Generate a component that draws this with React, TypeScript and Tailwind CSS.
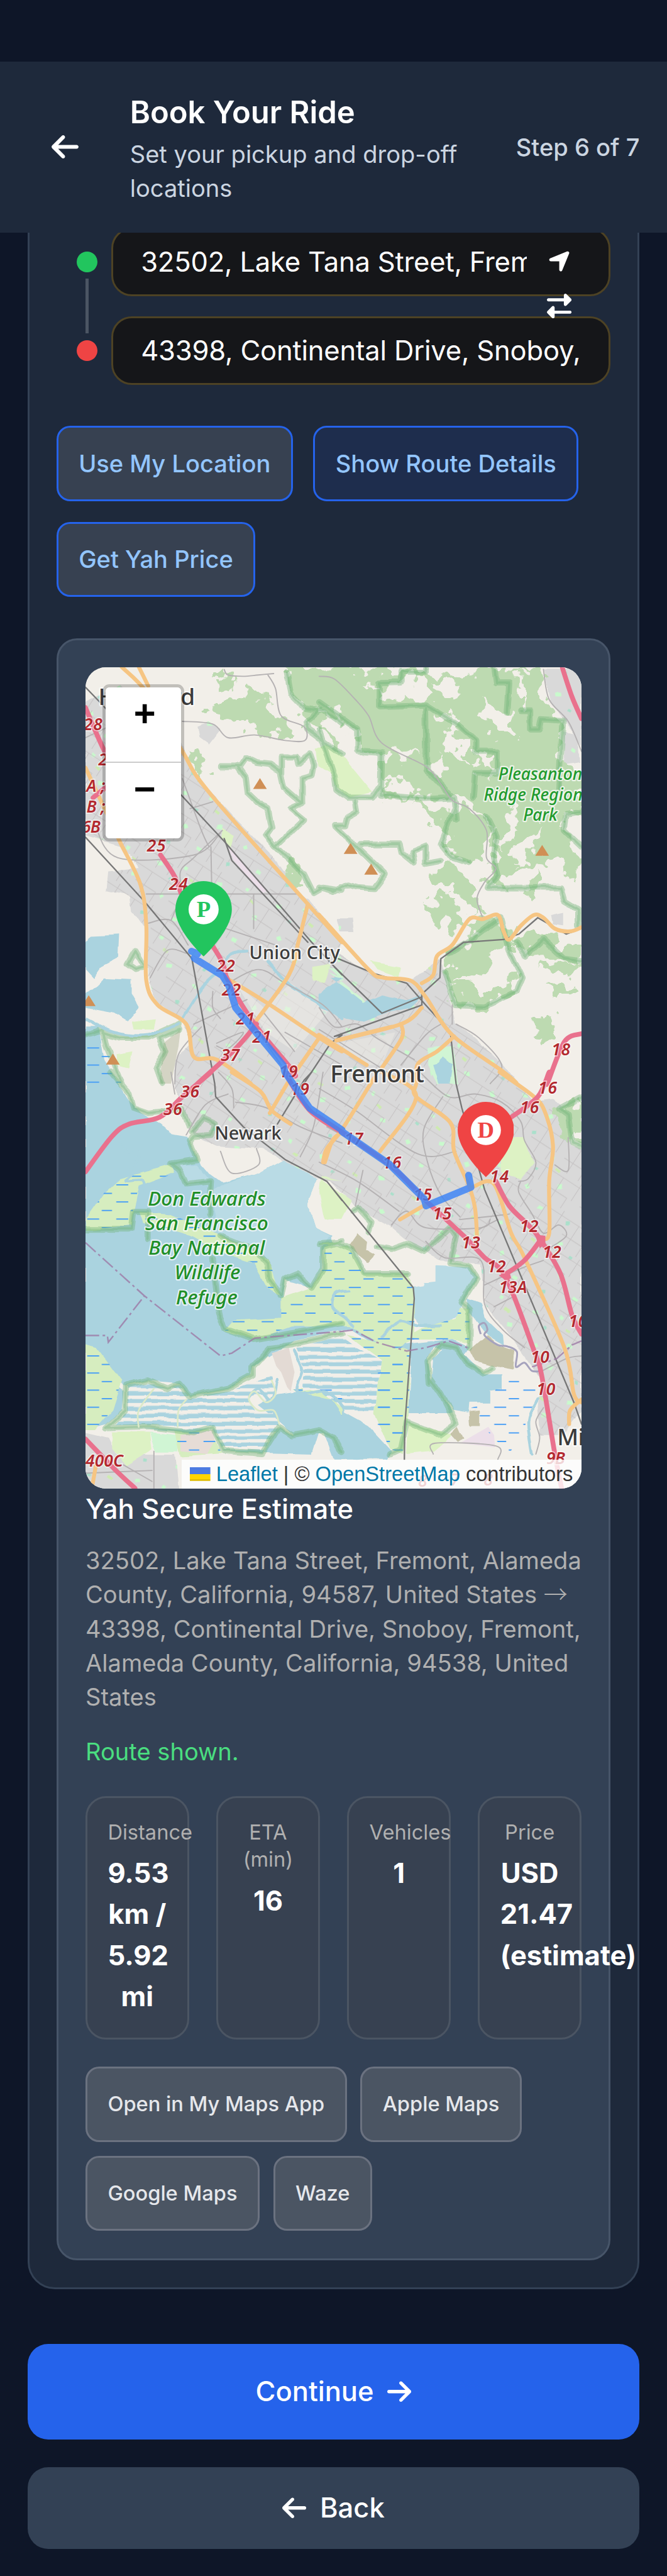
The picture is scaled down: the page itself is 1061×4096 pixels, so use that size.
import React from "react";
import { FaArrowLeft, FaArrowRight, FaLocationArrow, FaRightLeft } from "react-icons/fa6";

/* ---------- Map geometry ---------- */

// Survey sheets: origin of each sheet in map units.
const SHEETS: Record<string, [number, number]> = {
  nw: [-16.67, -6.67],
  ne: [136.67, -6.67],
  sw: [-16.67, 236.67],
  se: [136.67, 236.67],
};

function points(src: string): [number, number][] {
  let origin = SHEETS.nw;
  const out: [number, number][] = [];
  for (const token of src.trim().split(/\s+/)) {
    if (SHEETS[token]) {
      origin = SHEETS[token];
      continue;
    }
    const [x, y] = token.split(",").map(Number);
    out.push([x / 9 + origin[0], y / 6.272 + origin[1]]);
  }
  return out;
}

const fmt = (n: number) => n.toFixed(2);

function straight(src: string, close = false) {
  return "M" + points(src).map(([x, y]) => `${fmt(x)} ${fmt(y)}`).join("L") + (close ? "Z" : "");
}

// Catmull-Rom spline through the points.
function curve(src: string) {
  const p = points(src);
  let d = `M${fmt(p[0][0])} ${fmt(p[0][1])}`;
  for (let i = 0; i < p.length - 1; i++) {
    const a = p[Math.max(0, i - 1)];
    const b = p[i];
    const c = p[i + 1];
    const e = p[Math.min(p.length - 1, i + 2)];
    d += `C${fmt(b[0] + (c[0] - a[0]) / 6)} ${fmt(b[1] + (c[1] - a[1]) / 6)} ${fmt(c[0] - (e[0] - b[0]) / 6)} ${fmt(c[1] - (e[1] - b[1]) / 6)} ${fmt(c[0])} ${fmt(c[1])}`;
  }
  return d;
}

const URBAN = [
  "nw 150,170 330,110 420,170 640,290 720,430 840,520 930,590 1130,730 1260,860 1330,900 1500,1040 ne 100,1090 270,1170 470,1200 640,1110 690,1260 720,1340 860,1430 960,1490 1050,1568 se 1000,0 1130,110 1240,100 1300,160 1320,270 1380,280 1380,1240 1280,1330 1160,1330 1150,1230 1170,1130 1000,960 870,850 850,700 640,690 500,640 380,570 200,500 60,400 sw 1380,390 1180,320 1080,280 840,270 720,230 660,120 620,60 nw 620,1568 620,1480 700,1420 660,1340 530,1270 480,1190 470,1000 430,960 390,940 380,880 260,860 270,790 430,780 350,700 150,660",
  "nw 740,260 800,245 860,270 800,325 750,300",
  "ne 1180,50 1380,50 1380,330 1300,250 1220,170",
  "ne 90,960 170,960 180,1010 110,1010",
  "ne 1220,950 1290,940 1290,990 1230,985",
  "ne 1280,280 1360,290 1370,390 1290,400",
  "sw 150,1320 270,1340 310,1400 620,1400 640,1560 150,1560",
];

const FOREST = [
  "ne 50,50 560,45 700,70 900,50 1170,45 1190,160 1270,230 1290,400 1380,420 1380,560 1280,600 1380,760 1300,800 1200,760 1080,780 1000,800 960,850 900,840 930,700 880,600 820,560 700,520 560,520 340,510 330,360 200,350 190,260 100,230 0,170 0,60",
  "nw 1210,50 1340,45 1500,80 1500,360 1380,260 1300,230 1260,150",
  "nw 800,180 930,180 1000,140 1130,150 1110,210 1200,250 1290,270 1220,300 1050,270 930,240 820,210",
  "ne 500,540 700,560 880,620 890,760 830,760 700,720 640,700 720,640 610,610",
  "ne 590,790 690,760 800,840 860,930 820,950 740,880 640,830",
  "ne 550,900 680,880 760,980 690,1010 620,950",
  "ne 680,1080 820,1050 800,970 950,960 1040,1090 1000,1020 1180,1010 1300,1060 1380,1050 1380,1120 1240,1110 1100,1080 980,1050 920,1140 840,1150 780,1220 900,1220 1000,1200 1060,1170 1040,1230 880,1290 730,1280 690,1190",
  "ne 1200,1210 1300,1210 1350,1250 1260,1250",
  "ne 1130,1340 1200,1330 1250,1370 1200,1420 1120,1400",
  "se 1250,140 1380,90 1380,270 1310,260",
  "nw 840,90 890,60 920,90 870,115",
  "nw 690,340 720,350 800,430 770,440 720,400",
  "nw 1200,780 1260,770 1300,830 1270,850",
  "ne 1060,850 1180,790 1150,860 1120,920",
  "ne 1130,1150 1240,1130 1380,1110 1300,1170",
];

const CLEARINGS = [
  "ne 200,120 380,95 560,70 600,130 560,160 330,165 330,120",
  "ne 620,90 700,90 760,140 700,160 640,130",
  "ne 600,200 700,250 780,310 790,400 740,390 720,340 650,330 690,280 620,240",
  "ne 590,420 640,350 660,420 620,450",
  "ne 0,190 120,240 180,280 170,340 40,270",
  "ne 820,360 900,360 920,430 820,430",
  "ne 340,460 450,440 520,500 360,500",
  "ne 820,170 930,190 1040,260 1050,300 940,290 880,240",
  "ne 350,340 450,345 520,375 440,375",
  "ne 970,640 1030,560 1050,630 970,710",
  "ne 980,740 1090,660 1180,620 1140,720 1040,770",
  "ne 760,1170 880,1150 1010,1150 960,1200 800,1210 720,1200",
  "ne 1055,60 1085,60 1080,180 1055,180",
];

const PARK_EDGES = [
  "ne 320,100 430,98 430,60 560,60 560,45",
  "ne 315,100 315,185 560,180 720,250 820,310 820,350 940,350 940,430 820,430 810,520",
  "ne 560,190 565,420 700,520",
  "ne 0,170 140,240 200,270 200,350 330,355 325,510 560,525 710,520 720,600",
  "nw 1210,60 1230,140 1300,190 1400,200 1500,250",
  "nw 1390,190 1310,240 1320,270 1500,360",
  "nw 860,405 960,405 990,375 1050,395 1120,400 1180,430 1180,370 1260,370 1270,395 1330,360 1350,400 1340,440 1290,450 1290,540 1190,480 1170,420",
  "nw 950,410 990,450 1000,500 1060,540 1110,560 1130,630 1100,660 1150,700 1300,600 1230,560 1290,540",
  "nw 1150,700 1300,800 1350,870 1400,850 1500,860",
  "ne 0,270 80,440 90,490 150,520 280,520 320,480",
  "ne 190,530 200,570 150,590 140,620 80,620 350,800 290,855 200,850 150,840 80,865 0,850",
  "ne 220,690 420,690 430,720 500,760 490,720 560,700 560,760 640,750",
  "ne 720,540 640,690 700,740 790,760",
  "ne 920,50 930,100 1000,100 990,210",
  "ne 1060,200 1110,200 1110,270 1160,270 1170,230 1280,235 1270,350 1260,490",
  "ne 880,590 930,660 920,740 940,800 890,850 1270,850 1290,900 1360,930 1360,990",
  "ne 1380,570 1300,580 1290,640 1380,700",
  "ne 680,1090 800,1040 950,960 1000,1080 1070,1180 1040,1230 870,1285 720,1280 660,1160",
  "ne 1040,1050 1090,1100 1180,1040 1290,1110 1380,1120",
  "nw 150,1390 240,1370 260,1430 340,1568",
  "nw 240,1380 330,1400 480,1400 640,1350",
  "nw 370,1130 410,1080 460,1140 410,1150 370,1130",
  "nw 640,1370 540,1400 570,1450 520,1510 550,1568",
  "sw 280,0 380,80 400,130 480,150 600,140 660,130 690,200",
  "sw 710,220 770,170 830,190 810,230 720,235 700,250 740,320 600,335 650,360 680,410 810,400 800,520",
  "sw 150,575 390,575 400,510 480,510 480,610",
  "sw 860,600 1040,650 1110,700 1120,760 1180,820 1200,760 1270,740 1340,790 1400,720 1400,640 1500,620",
  "sw 820,680 850,880 880,940 1040,980 1200,960 1500,920",
  "sw 260,1305 360,1240 360,1150 480,1130 580,1160 640,1140 700,1190 900,1160 1030,1110 1030,1080 1120,1010 1230,1000 1500,960",
  "sw 260,1305 480,1300 720,1320 820,1300 880,1390 1080,1400 1170,1300 1240,1330 1380,1310 1460,1340 1500,1390",
  "se 0,630 90,625 170,650 240,740 460,740",
  "se 310,640 380,650 460,630 550,660 690,570 720,600 690,700 790,710 830,750 750,840 790,870 790,1010",
  "se 580,1140 570,1060 640,1000 720,1010 780,1070 870,1105 910,1085",
  "se 580,1120 640,1180 720,1290 640,1330 460,1280 430,1380 370,1400",
  "se 1380,90 1260,135 1310,160 1330,260 1380,270",
  "se 180,510 210,500 275,550 260,580",
];

const WATER = [
  "sw 150,-170 220,-170 250,-40 370,100 440,150 540,190 600,230 690,240 740,320 800,370 870,405 1060,370 1190,320 1370,390 1320,480 1360,570 1450,600 1400,640 1390,720 1340,790 1200,760 1180,920 1500,925 se 0,935 160,900 240,920 300,970 440,1000 700,980 790,1010 760,1040 600,1010 560,1060 320,1010 160,940 0,965 sw 1250,985 1030,1080 1020,1110 900,1160 700,1190 640,1140 480,1130 350,1150 150,1050",
  "nw 150,1050 180,1025 330,1020 325,1105 230,1140 190,1180 150,1150",
  "nw 200,1215 250,1180 390,1185 390,1240 430,1290 370,1340 300,1310 150,1290 150,1240",
  "nw 1380,1240 1500,1180 ne 60,1180 140,1220 230,1270 330,1240 460,1260 550,1240 480,1290 350,1310 230,1340 140,1330 0,1290",
  "sw 260,1290 340,1240 350,1170 150,1060 150,1310",
  "sw 1090,1395 1170,1300 1240,1330 1380,1310 1340,1400",
  "sw 1060,1220 1160,1180 1260,1170 1500,1190 se 130,1250 260,1300 380,1390 360,1420 80,1420 20,1310 0,1300 sw 1460,1320 1250,1330 1170,1280",
  "se 490,1030 560,1020 590,1130 640,1180 700,1250 470,1250",
  "se 590,1130 600,1050 660,1010 740,1020 870,1110 960,1110 960,1165 900,1170 900,1210 790,1210 785,1250 700,1240",
  "se 775,830 850,850 870,900 960,960 965,1000 890,970 780,870",
  "se 610,-20 650,-60 700,-30 690,30 640,20",
  "se 0,600 60,600 70,630 0,660",
  "ne 600,1500 650,1490 700,1520 690,1568 630,1568",
];

const SALT = [
  "sw 600,340 740,340 800,390 690,415 640,360",
  "sw 880,410 1060,370 1190,320 1370,390 1320,480 1360,570 1440,600 1400,640 1390,720 1340,790 1270,740 1200,760 1180,820 1120,760 1100,680 850,590 810,440",
  "se 500,790 550,785 555,770 615,765 615,710 790,715 830,750 760,840 730,890 660,920 540,935 500,900",
];

const MARSH = [
  "sw 150,540 250,440 330,390 600,340 620,370 430,420 400,510 390,560 160,580",
  "sw 430,510 600,520 800,580 1000,640 1120,690 1170,820 1110,790 1040,700 860,660 700,600 450,550",
  "sw 1180,830 1340,790 1400,720 1410,640 1500,620 se 0,630 150,640 240,740 460,740 500,800 500,980 430,1010 330,1000 160,930 0,925 sw 1500,930 1240,930 1040,980 880,950 930,910 1180,900",
  "se 440,980 540,940 720,900 740,860 790,870 790,1000 700,980",
  "sw 150,1000 210,1010 340,1130 290,1240 200,1310 150,1310",
  "se 140,960 480,1020 470,1260 440,1400 370,1380 290,1250 330,1060",
  "sw 1240,1160 1500,1160 1500,1260 1440,1200 1280,1180",
  "sw 620,1310 800,1310 870,1400 650,1410",
];

const PONDS = [
  "sw 370,1150 480,1140 580,1160 640,1145 700,1190 900,1170 1130,1110 1140,1180 1040,1180 1010,1200 1050,1250 1140,1250 1170,1300 1080,1400 880,1390 820,1300 720,1320 300,1300 370,1240",
  "sw 1260,1010 1500,970 se 200,1010 330,1060 290,1250 130,1240 0,1165 sw 1290,1170 1300,1080",
];

const FIELDS = [
  "nw 1360,340 1420,320 1500,370 ne 90,340 280,500 150,520 90,480 nw 1440,430 1370,400",
  "nw 310,1460 400,1450 380,1510 320,1500",
  "nw 390,1340 520,1330 510,1370 400,1370",
  "nw 870,630 930,660 910,700 860,670",
  "nw 1340,1140 1440,1130 1410,1200 1340,1190",
  "ne 270,1120 430,1140 420,1180 300,1150",
  "se 950,240 1080,240 1130,330 1060,390 960,370",
  "sw 1390,380 1500,400 se 0,390 170,470 120,540 0,540 sw 1410,540 1380,440",
  "sw 290,1320 490,1320 500,1380 360,1440 290,1380",
  "se 470,1280 700,1330 600,1390 460,1400",
];

const MINT = [
  "ne 570,1440 700,1430 730,1568 620,1568 570,1500",
  "nw 1420,1270 1500,1180 ne 50,1160 250,1270 240,1300 170,1330 0,1290",
  "sw 490,1320 640,1330 640,1390 520,1390",
  "nw 1430,1140 1500,1150 1500,1190",
  "sw 150,1120 200,1130 200,1230 150,1250",
];

const LANDFILL = [
  "se 160,635 205,590 255,620 250,650 300,670 260,700 170,650",
  "se 790,1020 880,965 940,1000 1030,1020 1020,1090 900,1075 820,1060",
  "se 790,1245 845,1240 845,1295 795,1295",
  "se 690,1330 730,1300 760,1345 730,1360",
];

const RAIL = [
  "nw 150,665 460,900 710,1110 830,1568 sw 835,90 980,200 1200,320 1420,400 1500,470 se 40,400 250,580 495,790 500,830 450,1300 448,1420",
  "nw 150,115 240,180 640,500 880,680 1340,1050 1500,1170",
  "nw 880,670 920,750 1320,1050",
  "ne 80,1140 330,1310 540,1250",
  "ne 100,1110 290,1165 460,1200 560,1280 690,1380 720,1568 se 750,130 870,430 1340,1210 1380,1290",
  "nw 1300,1568 1440,1420 1500,1390 ne 80,1395 540,1280 540,1240 635,1180 640,1110 760,1050 970,1040 1050,1020 1150,960 1300,1020 1380,1000",
  "sw 1160,190 1300,30 1340,0",
];

const STREETS = [
  "nw 150,300 300,250", "nw 200,620 320,740 720,730 860,650", "nw 470,873 1260,873", "nw 810,700 815,870",
  "nw 1035,875 1035,1000", "nw 890,1000 1150,1060", "nw 880,50 900,70 980,75 1060,70 1140,65",
  "nw 1110,70 1150,120 1180,220 1300,260 1305,310 1200,310 1040,290 900,300 820,250 660,240",
  "nw 660,450 760,640 800,700", "nw 820,535 700,560", "nw 660,870 650,790 720,740 870,640",
  "nw 600,970 660,870", "nw 480,980 600,970 690,1060", "nw 490,1180 580,1080 680,1090", "nw 720,1350 1000,1260",
  "nw 840,1420 980,1380 900,1440 840,1430", "nw 620,1568 640,1460 760,1360", "nw 900,1200 1060,1150 1200,1200 1400,1280 1500,1360",
  "nw 1010,1330 1180,1500", "nw 1090,1310 1250,1450", "nw 1200,1380 1500,1500", "nw 820,1230 820,1290 860,1330",
  "ne 0,75 80,85 190,160 260,220 330,320 560,405 640,470 700,530 790,560 880,640 880,740 930,780 870,830 830,890 860,960",
  "ne 1180,50 1210,160 1310,240 1380,350", "ne 0,1290 80,1360 200,1350 300,1400 500,1480",
  "ne 430,1500 560,1390 640,1350", "ne 700,1280 700,1350", "ne 720,1350 840,1400 960,1500 900,1568", "ne 0,1370 300,1500 450,1568",
  "se 0,60 190,140 520,300 720,290", "se 40,200 380,330", "se 650,90 550,210 570,330 640,450 740,530",
  "se 530,0 680,90 820,80 960,110 1060,180 1080,250 1140,330 1100,390 1050,400",
  "se 0,330 200,400 420,510", "se 230,360 190,490", "se 380,560 460,510 560,570 850,570 900,540",
  "se 740,540 880,530 1000,520", "se 830,580 940,540", "se 560,620 660,680 850,690 870,850 960,940 1080,1010",
  "se 870,780 1060,720 1180,690", "se 920,860 1030,820", "se 1060,400 1050,440 1120,520 1180,590 1260,560 1300,600 1200,650",
  "se 1240,340 1310,360 1310,240", "se 1160,1100 1300,1050 1380,1040", "se 600,1400 610,1360 930,1370 940,1420",
  "se 1180,1230 1140,1280 1160,1340 1140,1400",
  "sw 680,230 780,120 900,80", "sw 860,290 920,370 1060,340 1050,280", "sw 930,130 920,60 850,0", "sw 940,110 1100,130 1280,200 1500,260",
  "sw 1280,310 1350,200 1400,0", "sw 600,0 620,80", "sw 150,1470 500,1460", "sw 510,1390 510,1560", "sw 350,1440 500,1500",
];

const PRIMARY = [
  "nw 340,40 480,140 660,350 800,500 1320,910 1500,1050 ne 0,950 260,1150 340,1180 480,1190 560,1250 700,1390 960,1520 1040,1568 se 950,0 1130,90 1190,150 1230,270 1210,400 1210,590 1170,610",
  "nw 430,40 480,110", "nw 150,410 250,560 330,680 440,840 470,990 470,1190 530,1280 680,1350 720,1470 840,1480 1020,1568 sw 920,0 1070,70 1130,140 1230,190",
  "nw 1320,910 1270,1050 1220,1170 1040,1345", "nw 900,1185 1100,1270 1380,1400 1500,1450 ne 0,1390 250,1500",
  "nw 1380,1400 1240,1540 sw 1230,20 1120,150",
  "ne 380,1360 90,1410", "ne 90,1410 430,1350 540,1290", "ne 430,1350 435,1400 330,1510", "ne 710,1395 620,1450 520,1495 510,1568 se 510,90 690,185 710,290 790,420 820,500 830,600",
  "ne 540,1200 600,1170 620,1100 700,1060 790,965 860,965 940,950 970,1010 1000,1040 1060,990 1130,950 1180,960 1240,1000 1320,1010 1380,995",
  "se 330,0 510,90 320,290", "se 290,20 120,210 40,280 20,330", "sw 1410,330 1450,250 1500,220", "se 425,540 560,485",
  "se 810,420 920,410 1010,590 1080,680 1290,1010 1340,1180 1380,1210", "se 1380,1200 1320,1240 1315,1290",
  "sw 185,1520 205,1440",
];

const MOTORWAY = [
  "nw 150,190 230,320 300,420", "nw 190,520 260,480", "nw 545,730 620,810 680,910 860,1110 900,1190 1040,1350 1250,1530 sw 1210,10 1330,140 1500,220 se 0,165 370,340 560,470 760,600 870,680 980,750 1130,1020 1170,1110 1240,1400 1280,1540",
  "nw 1050,1350 940,1440 740,1568 sw 810,0 660,90 540,165 380,190 290,235 150,365",
  "ne 1280,45 1330,150 1380,230", "ne 1380,1385 1290,1415 1200,1568 se 1210,0 1150,90 1000,170",
  "se 930,400 1000,490 1100,560 1160,610 1270,740 1330,890 1380,960", "se 1170,610 1080,690 970,745", "sw 150,1345 310,1460 410,1525",
];

type Label = { t: string; s: string; x: number; y: number };
const EXITS: Label[] = [
  { t: "28", s: "nw", x: 140, y: 272 }, { t: "27", s: "nw", x: 218, y: 402 }, { t: "A;", s: "nw", x: 155, y: 498 }, { t: "B;", s: "nw", x: 155, y: 575 },
  { t: "6B", s: "nw", x: 130, y: 648 }, { t: "25", s: "nw", x: 473, y: 718 }, { t: "24", s: "nw", x: 590, y: 858 }, { t: "22", s: "nw", x: 838, y: 1158 },
  { t: "22", s: "nw", x: 868, y: 1245 }, { t: "21", s: "nw", x: 942, y: 1352 }, { t: "21", s: "nw", x: 1028, y: 1418 }, { t: "37", s: "nw", x: 862, y: 1485 },
  { t: "19", s: "nw", x: 1168, y: 1545 }, { t: "19", s: "sw", x: 1228, y: 83 }, { t: "36", s: "sw", x: 650, y: 93 }, { t: "36", s: "sw", x: 560, y: 157 },
  { t: "17", s: "se", x: 132, y: 265 }, { t: "16", s: "se", x: 333, y: 352 }, { t: "15", s: "se", x: 495, y: 470 }, { t: "15", s: "se", x: 597, y: 540 },
  { t: "14", s: "se", x: 898, y: 403 }, { t: "13", s: "se", x: 748, y: 645 }, { t: "12", s: "se", x: 1055, y: 587 }, { t: "12", s: "se", x: 1175, y: 680 },
  { t: "12", s: "se", x: 883, y: 733 }, { t: "13A", s: "se", x: 945, y: 810 }, { t: "10", s: "se", x: 1312, y: 933 }, { t: "10", s: "se", x: 1112, y: 1065 },
  { t: "10", s: "se", x: 1143, y: 1182 }, { t: "9B", s: "se", x: 1195, y: 1437 }, { t: "16", s: "se", x: 1152, y: 78 }, { t: "16", s: "se", x: 1057, y: 150 },
  { t: "18", s: "ne", x: 1222, y: 1465 }, { t: "400C", s: "sw", x: 150, y: 1447 }, { t: "8", s: "se", x: 520, y: 1520 }, { t: "7", s: "se", x: 690, y: 1515 },
  { t: "8", s: "se", x: 865, y: 1515 },
];

const PEAKS = ["nw 1068,448", "ne 165,686", "ne 273,762", "ne 1173,693", "nw 167,1244", "nw 294,1458"];

function at(s: string, x: number, y: number): [number, number] {
  const o = SHEETS[s];
  return [x / 9 + o[0], y / 6.272 + o[1]];
}

function Shapes({ list, fill }: { list: string[]; fill: string }) {
  return (
    <>
      {list.map((s) => (
        <path key={s} d={straight(s, true)} fill={fill} />
      ))}
    </>
  );
}

function Lines({ list, color, width, opacity = 1, bent = true }: { list: string[]; color: string; width: number; opacity?: number; bent?: boolean }) {
  return (
    <g fill="none" stroke={color} strokeWidth={width} opacity={opacity} strokeLinecap="round" strokeLinejoin="round">
      {list.map((s) => (
        <path key={s} d={bent ? curve(s) : straight(s)} />
      ))}
    </g>
  );
}

function TownLabel({ t, s, x, y, w, size, color = "#3b3b3b", italic = false }: Label & { w: number; size: number; color?: string; italic?: boolean }) {
  const [px, py] = at(s, x, y);
  return (
    <text
      x={px}
      y={py}
      fontSize={size}
      textLength={w}
      fill={color}
      fontStyle={italic ? "italic" : "normal"}
      fontWeight={500}
      stroke="#ffffffb0"
      strokeWidth={1.6}
      paintOrder="stroke"
      strokeLinejoin="round"
    >
      {t}
    </text>
  );
}

function Terrain() {
  return (
    <svg viewBox="0 0 290 480" className="absolute inset-0 h-full w-full font-['Noto_Sans',sans-serif]">
      <defs>
        <filter id="ragged" x="-5%" y="-5%" width="110%" height="110%">
          <feTurbulence type="fractalNoise" baseFrequency="0.11" numOctaves="3" seed="7" />
          <feDisplacementMap in="SourceGraphic" scale="20" xChannelSelector="R" yChannelSelector="G" />
        </filter>
        <filter id="rugged" x="-5%" y="-5%" width="110%" height="110%">
          <feTurbulence type="fractalNoise" baseFrequency="0.08" numOctaves="2" seed="3" />
          <feDisplacementMap in="SourceGraphic" scale="3" xChannelSelector="R" yChannelSelector="G" />
        </filter>
        <pattern id="reeds" width="17" height="10" patternUnits="userSpaceOnUse">
          <path d="M1 2.5h7M9.5 7.5h6" stroke="#4a9ff5" strokeWidth="0.7" />
        </pattern>
        <pattern id="stripes" width="10" height="4.3" patternUnits="userSpaceOnUse">
          <rect width="10" height="4.3" fill="#aad3df" />
          <rect width="10" height="2" fill="#f2efe9" />
        </pattern>
        <pattern id="blocks" width="23" height="19" patternUnits="userSpaceOnUse" patternTransform="rotate(33)">
          <path d="M0 3h23M0 12h14M6 3v16M17 0v12M14 12v7" stroke="#c6c3c4" strokeWidth="0.4" fill="none" />
        </pattern>
        <pattern id="gardens" width="37" height="43" patternUnits="userSpaceOnUse" patternTransform="rotate(20)">
          <path d="M4 6l3-1 1 2-3 1zM21 3l2 .5-.5 2-2-.5zM30 17l3-.5.5 2.5-3 .5zM11 24l2-1.5 1.5 2-2 1.5zM24 33l3 .5-.5 2-3-.5z" fill="#c8facc" />
          <path d="M14 12l2 .5-.5 1.5-2-.3zM5 36l2-.5.5 2-2 .5z" fill="#aae0cb" />
          <path d="M26 9l3 1-.5 1.5-3-1z" fill="#cdebb0" />
        </pattern>
      </defs>

      <rect width="290" height="480" fill="#f2efe9" />
      <g filter="url(#rugged)">
        <Shapes list={URBAN} fill="#d9d9d9" />
        <Shapes list={URBAN} fill="url(#gardens)" />
      </g>
      <path d={straight(URBAN[0], true)} fill="url(#blocks)" />
      <path d={straight("nw 940,1200 1090,1290 1230,1200 1430,1300 1250,1450 1100,1380", true)} fill="#f2efe9" opacity="0.5" />
      <path d={straight("ne 100,1420 400,1380 330,1500 250,1500", true)} fill="#f2efe9" opacity="0.4" />

      <g filter="url(#ragged)">
        <Shapes list={FOREST} fill="#bddab1" />
        <Shapes list={CLEARINGS} fill="#f2efe9" />
      </g>
      <g filter="url(#rugged)">
        <Shapes list={FIELDS} fill="#ddf2c4" />
        <Shapes list={MINT} fill="#d0f5d4" />
        <Shapes list={WATER} fill="#aad3df" />
        <Shapes list={SALT} fill="#b9dbe5" />
        <Shapes list={MARSH} fill="#d6edbf" />
        <Shapes list={PONDS} fill="url(#stripes)" />
        <Shapes list={LANDFILL} fill="#c6c3a9" />
      </g>
      <path d={straight("nw 560,1420 650,1370 640,1430 600,1568 540,1568", true)} fill="#d4d4c4" />
      <path d={straight("sw 1130,1030 1220,1010 1250,1100 1230,1170 1180,1130", true)} fill="#e3dad4" />
      <path d={straight("sw 650,1330 820,1310 830,1350 790,1400 650,1390", true)} fill="#e6dcd6" />
      <path d={straight("sw 1040,1080 1110,1040 1180,1100 1220,1170 1170,1170 1130,1110", true)} fill="#f2efe9" />
      <path d={straight("nw 900,700 1110,860 1080,870 930,750", true)} fill="#ecdfe9" />
      <path d={straight("se 740,1360 890,1300 920,1330 925,1375", true)} fill="#ecdfe9" />
      <Shapes list={MARSH} fill="url(#reeds)" />
      <Shapes
        list={["se 960,1110 1150,1110 1140,1200 1080,1300 1000,1400 850,1290 800,1230 900,1210", "nw 150,1400 220,1380 260,1440 340,1568 150,1568", "se 290,1010 480,1030 460,1260 440,1340 290,1340"]}
        fill="url(#reeds)"
      />

      <g filter="url(#rugged)">
        <Lines list={PARK_EDGES} color="#6fb277" width={3.6} opacity={0.4} bent={false} />
        <Lines list={PARK_EDGES} color="#6fb277" width={1.3} opacity={0.35} bent={false} />
        <Lines
          list={[
            "nw 660,1330 760,1220 860,1150 920,1090 1000,1080", "nw 1110,1120 1200,1190 1300,1240 1420,1290 1500,1330",
            "nw 150,1330 300,1380 480,1390 640,1350", "sw 340,230 370,290 430,290 400,370 360,400 450,400 460,440",
            "se 160,800 90,810 70,860 140,900 180,930", "se 330,970 420,910 520,930 640,930", "sw 1250,1020 1290,1090 1260,1160 1310,1180 1420,1170 1500,1230",
            "se 1150,1200 1100,1280 1120,1400", "sw 1010,1190 1060,1160 1130,1200 1160,1130",
          ]}
          color="#aad3df"
          width={1.7}
        />
      </g>
      <Lines list={["sw 1130,1130 1150,1180 1100,1210 1040,1170 1010,1200 1060,1240 1140,1240 1170,1290", "sw 510,1160 430,1240 430,1300", "sw 680,1200 640,1240 635,1300"]} color="#dceac8" width={1} />

      <Lines list={STREETS} color="#b5b2b3" width={0.7} />
      <Lines list={RAIL} color="#777777" width={0.85} bent={false} />
      <g fill="none" stroke="#9d7aa6" strokeWidth="0.9" strokeDasharray="8 2 1.5 2" opacity="0.8">
        <path d={straight("sw 150,625 460,820 860,1040 920,1030 1040,975 1500,950 se 180,945 300,990 460,1022 560,1010 680,985 780,1010")} />
        <path d={straight("sw 150,965 265,965 270,990 460,820")} />
        <path d={straight("se 1120,1080 1250,1050 1330,1000 1380,985")} />
      </g>
      <path d={curve("se 850,960 840,930 870,920 885,945 870,965 940,1000 990,1005 1040,1025 1035,1080 1080,1065 1120,1095 1170,1095")} fill="none" stroke="#a5a2bd" strokeWidth="1.1" />

      <Lines list={PRIMARY} color="#f6c583" width={2.3} />
      <Lines list={MOTORWAY} color="#e9718d" width={2.8} />
      <path d={straight("se 1135,595 1190,600 1190,630 1160,645", true)} fill="#e9718d" />
      <path d={straight("se 945,745 1000,730 1010,755 985,765", true)} fill="#e9718d" />

      {PEAKS.map((p) => {
        const [[x, y]] = points(p);
        return <path key={p} d={`M${fmt(x)} ${fmt(y)}l4 6.4h-8z`} fill="#d08f55" />;
      })}

      <g fontSize="9.7" fontStyle="italic" fontWeight="600" fill="#b3282e" stroke="#ffffff90" strokeWidth="1.2" paintOrder="stroke">
        {EXITS.map((l, i) => {
          const [x, y] = at(l.s, l.x, l.y);
          return (
            <text key={i} x={x} y={y} textLength={l.t.length * 5.5}>
              {l.t}
            </text>
          );
        })}
      </g>

      <TownLabel t="Hayward" s="nw" x={218} y={180} w={56.5} size={13.6} />
      <TownLabel t="Union City" s="nw" x={1012} y={1112} w={53} size={10.6} />
      <TownLabel t="Fremont" s="se" x={58} y={37} w={55} size={13.8} />
      <TownLabel t="Newark" s="sw" x={830} y={247} w={39} size={10.6} />
      <TownLabel t="Milpitas" s="se" x={1252} y={1368} w={50} size={13.6} />
      <TownLabel t="Don Edwards" s="sw" x={478} y={490} w={69} size={11.6} color="#1f8f28" italic />
      <TownLabel t="San Francisco" s="sw" x={464} y={580} w={72} size={11.6} color="#1f8f28" italic />
      <TownLabel t="Bay National" s="sw" x={482} y={668} w={68} size={11.6} color="#1f8f28" italic />
      <TownLabel t="Wildlife" s="sw" x={618} y={760} w={38.5} size={11.6} color="#1f8f28" italic />
      <TownLabel t="Refuge" s="sw" x={626} y={850} w={36} size={11.6} color="#1f8f28" italic />
      <TownLabel t="Pleasanton" s="ne" x={943} y={455} w={49} size={9.7} color="#1f9a2d" italic />
      <TownLabel t="Ridge Regional" s="ne" x={866} y={530} w={66} size={9.7} color="#1f9a2d" italic />
      <TownLabel t="Park" s="ne" x={1073} y={605} w={20} size={9.7} color="#1f9a2d" italic />

      <path
        d={straight("nw 708,1083 740,1092 722,1108 870,1172 905,1210 940,1290 1190,1500 sw 1200,0 1330,132 1500,212 se 120,218 370,338 553,465 562,490 798,422 786,378")}
        fill="none"
        stroke="#3b82f6"
        strokeOpacity="0.82"
        strokeWidth="4.1"
        strokeLinecap="round"
        strokeLinejoin="round"
      />
    </svg>
  );
}

function Pin({ letter, color, className }: { letter: string; color: string; className: string }) {
  return (
    <svg viewBox="0 0 33 44" className={"absolute h-11 w-[33px] " + className}>
      <path d="M16.5 0C7.4 0 0 7.4 0 16.5 0 28.9 16.5 44 16.5 44S33 28.9 33 16.5C33 7.4 25.6 0 16.5 0z" fill={color} />
      <circle cx="16.5" cy="16.5" r="8.8" fill="#fff" />
      <text x="16.5" y="21.1" textAnchor="middle" fontSize="13.5" fontWeight="700" fill={color} className="font-['Liberation_Serif',serif]">
        {letter}
      </text>
    </svg>
  );
}

function RouteMap() {
  return (
    <div className="relative h-[480px] overflow-hidden rounded-xl bg-[#f2efe9]">
      <Terrain />
      <Pin letter="P" color="#22c55e" className="left-[52.5px] top-[125px]" />
      <Pin letter="D" color="#ef4444" className="left-[217.5px] top-[254px]" />
      <div className="absolute left-[10.1px] top-[10.1px] overflow-hidden rounded border-2 border-black/20 bg-clip-padding text-center font-['Liberation_Mono',monospace] text-[22px] font-bold leading-[34.4px] text-black">
        <div className="h-11 w-11 border-b border-[#ccc] bg-white indent-[1.4px]">+</div>
        <div className="h-11 w-11 bg-white indent-[1.4px]">−</div>
      </div>
      <div className="absolute bottom-0 right-0 flex h-[17px] items-center whitespace-pre bg-white/80 px-[5px] font-['Liberation_Sans',sans-serif] text-[12px] leading-[17px] text-[#333]">
        <svg viewBox="0 0 12 8" className="mr-[3.3px] h-2 w-3">
          <path fill="#4C7BE1" d="M0 0h12v4H0z" />
          <path fill="#FFD500" d="M0 4h12v3H0z" />
          <path fill="#E0BC00" d="M0 7h12v1H0z" />
        </svg>
        <span className="text-[#0078a8]">Leaflet</span> | © <span className="text-[#0078a8]">OpenStreetMap</span> contributors
      </div>
    </div>
  );
}

/* ---------- Page ---------- */

function Stat({ label, value }: { label: string; value: string }) {
  return (
    <div className="min-w-0 rounded-xl border-[1.105px] border-[#4b5563] bg-[#374151] p-[11.9px] text-center">
      <div className="text-xs leading-4 text-[#b0b0b0]">{label}</div>
      <div className="mt-1 text-base font-bold leading-6 text-white">{value}</div>
    </div>
  );
}

const ACTION = "h-11 rounded-lg border-[1.105px] border-[#2563eb] px-[11.9px] text-sm font-medium text-[#93c5fd] ";
const FIELD = "flex h-10 items-center rounded-xl border-[1.105px] border-[#4d4224] bg-[#151619] pl-[16.3px] text-base tracking-[-0.07px] text-white ";

export default function App() {
  return (
    <div className="h-[4096px] w-[1061px] overflow-hidden bg-[#0f172a]">
      <div className="flex w-[390px] flex-col bg-[#0e1628] pt-9 font-[Inter,sans-serif] text-white [zoom:2.7205]">
        <header className="relative z-10 flex h-[100px] items-center gap-4 bg-[#1e293b] px-4">
          <button className="flex h-11 w-11 shrink-0 items-center justify-center">
            <FaArrowLeft className="h-[18px] w-[18px]" />
          </button>
          <div className="flex-1">
            <h1 className="text-lg font-semibold leading-7">Book Your Ride</h1>
            <p className="text-sm leading-5 text-[#cbd5e1]">Set your pickup and drop-off locations</p>
          </div>
          <div className="shrink-0 text-sm font-medium text-[#cbd5e1]">Step 6 of 7</div>
        </header>

        <main className="-mt-5 px-4">
          <section className="rounded-2xl border-[1.105px] border-[#334155] bg-[#1e293b] p-[15.9px]">
            <div className="relative flex">
              <div className="flex w-8 flex-col items-center gap-1 pl-1 pt-[14px]">
                <span className="h-3 w-3 rounded-full bg-[#22c55e]" />
                <span className="h-8 w-0.5 bg-[#4b5563]" />
                <span className="h-3 w-3 rounded-full bg-[#ef4444]" />
              </div>
              <div className="flex min-w-0 flex-1 flex-col gap-3">
                <div className={FIELD + "pr-12"}>
                  <span className="overflow-hidden whitespace-nowrap">32502, Lake Tana Street, Fremont, Alameda County</span>
                </div>
                <div className={FIELD + "pr-4"}>
                  <span className="overflow-hidden whitespace-nowrap">43398, Continental Drive, Snoboy, Fremont</span>
                </div>
              </div>
              <FaLocationArrow className="absolute right-[22.8px] top-[12.6px] h-[14.4px] w-[14.4px]" />
              <FaRightLeft className="absolute right-[22.8px] top-[38.5px] h-[14.4px] w-[14.4px]" />
            </div>

            <div className="mt-6 flex flex-wrap gap-3">
              <button className={ACTION + "bg-[#374151]"}>Use My Location</button>
              <button className={ACTION + "bg-[#1e2d4d]"}>Show Route Details</button>
              <button className={ACTION + "bg-[#374151]"}>Get Yah Price</button>
            </div>

            <div className="mt-6 rounded-xl border-[1.105px] border-[#475569] bg-[#334155] p-[15.9px]">
              <RouteMap />
              <h2 className="text-base font-medium leading-6">Yah Secure Estimate</h2>
              <p className="mt-2 text-sm leading-5 text-[#b0b0b0]">
                32502, Lake Tana Street, Fremont, Alameda County, California, 94587, United States{" "}
                <span className="font-['Noto_Sans_CJK_JP',sans-serif] font-light leading-[0]">→</span> 43398, Continental Drive, Snoboy, Fremont, Alameda
                County, California, 94538, United States
              </p>
              <p className="mt-3 text-sm leading-5 text-[#4ade80]">Route shown.</p>
              <div className="mt-4 grid grid-cols-4 gap-4">
                <Stat label="Distance" value="9.53 km / 5.92 mi" />
                <Stat label="ETA (min)" value="16" />
                <Stat label="Vehicles" value="1" />
                <Stat label="Price" value="USD 21.47 (estimate)" />
              </div>
              <div className="mt-4 flex flex-wrap gap-2">
                {["Open in My Maps App", "Apple Maps", "Google Maps", "Waze"].map((name) => (
                  <button key={name} className="h-11 rounded-lg border-[1.105px] border-[#6b7280] bg-[#4b5563] px-[11.9px] text-xs font-medium text-[#e5e7eb]">
                    {name}
                  </button>
                ))}
              </div>
            </div>
          </section>

          <div className="mt-8 flex flex-col gap-4 pb-4 text-base font-medium">
            <button className="flex h-14 items-center justify-center gap-2 rounded-xl bg-[#2563eb]">
              Continue
              <FaArrowRight className="h-4 w-[14px]" />
            </button>
            <button className="flex h-12 items-center justify-center gap-2 rounded-xl bg-[#334155]">
              <FaArrowLeft className="h-4 w-[14px]" />
              Back
            </button>
          </div>
        </main>
      </div>
    </div>
  );
}
